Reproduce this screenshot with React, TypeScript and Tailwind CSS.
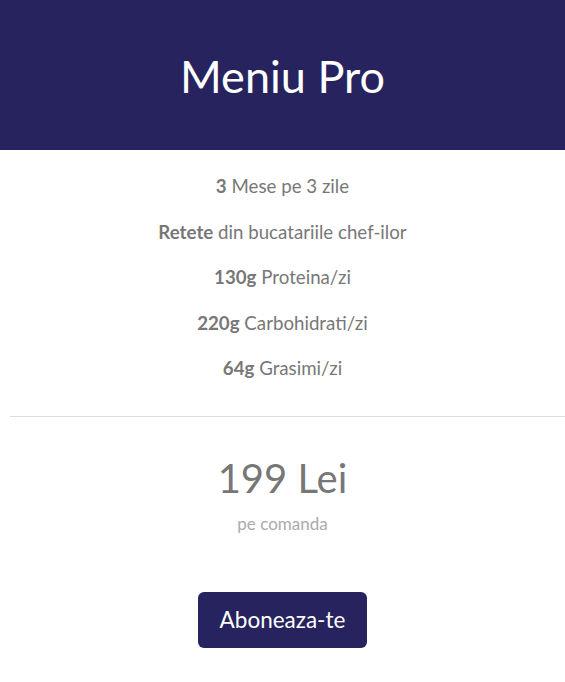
const features = [
  { bold: '3', rest: 'Mese pe 3 zile' },
  { bold: 'Retete', rest: 'din bucatariile chef-ilor' },
  { bold: '130g', rest: 'Proteina/zi' },
  { bold: '220g', rest: 'Carbohidrati/zi' },
  { bold: '64g', rest: 'Grasimi/zi' },
]

export default function App() {
  return (
    <div className="min-h-[682px] bg-white font-['Lato','Liberation_Sans',sans-serif]">
      <div className="h-[150px] bg-[#27235e] flex items-center justify-center">
        <h1 className="text-[45px] text-white font-normal leading-none pt-[2px]">Meniu Pro</h1>
      </div>

      <ul className="pt-[14px] text-center text-[18.7px] text-[#777777]">
        {features.map((f) => (
          <li key={f.bold} className="leading-[45.5px]">
            <span className="font-bold">{f.bold}</span> {f.rest}
          </li>
        ))}
      </ul>

      <div className="ml-[10px] mt-[24px] border-t border-[#dddddd]" />

      <div className="text-center">
        <div className="mt-[37px] text-[40px] leading-[48px] text-[#777777]">199 Lei</div>
        <div className="mt-[11px] text-[17px] leading-[22px] text-[#aaaaaa]">pe comanda</div>
        <button className="mt-[57px] h-[56px] px-[22px] rounded-[6px] bg-[#27235e] text-white text-[22.5px]">
          Aboneaza-te
        </button>
      </div>
    </div>
  )
}
